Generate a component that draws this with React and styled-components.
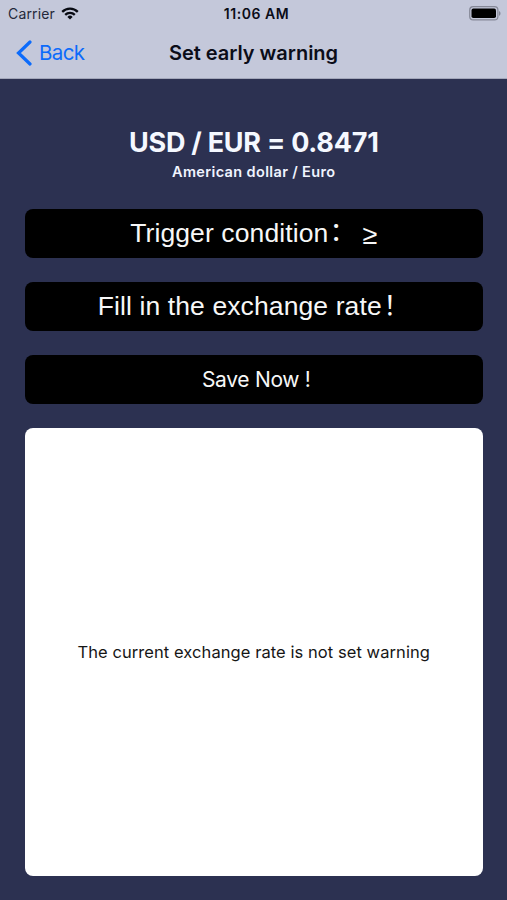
import React from "react";
import styled, { createGlobalStyle } from "styled-components";

const GlobalStyle = createGlobalStyle`
  * { box-sizing: border-box; }
  body { margin: 0; background: #2c3151; }
`;

const Screen = styled.div`
  display: flex;
  flex-direction: column;
  height: 900px;
  overflow: hidden;
  background: #2c3151;
  font-family: Inter, "Liberation Sans", sans-serif;
`;

const Header = styled.header`
  height: 79px;
  flex: none;
  background: #c4c8da;
  border-bottom: 1px solid #a3a7ba;
  color: #0b0d18;
`;

const StatusBar = styled.div`
  display: grid;
  grid-template-columns: 1fr auto 1fr;
  align-items: center;
  height: 27px;
  padding: 0 6px 0 8px;
  white-space: nowrap;
`;

const Carrier = styled.div`
  display: flex;
  align-items: center;
  gap: 6px;
  font-size: 14px;
  letter-spacing: 0.16px;
  color: #25283a;
`;

const Clock = styled.div`
  padding-left: 4px;
  font-size: 14px;
  font-weight: 600;
  letter-spacing: 0.55px;
`;

const BatteryIcon = styled.svg`
  justify-self: end;
`;

const NavBar = styled.nav`
  display: grid;
  grid-template-columns: 1fr auto 1fr;
  align-items: center;
  height: 51px;
  padding: 0 16px;
`;

const BackButton = styled.button`
  display: flex;
  align-items: center;
  justify-self: start;
  gap: 7px;
  padding: 0;
  border: 0;
  background: none;
  color: #0c6bfb;
  font: 400 20.5px Inter, sans-serif;
  letter-spacing: -0.6px;
`;

const Title = styled.h1`
  margin: 0;
  font-size: 20px;
  font-weight: 600;
  letter-spacing: -0.02px;
`;

const Content = styled.main`
  display: flex;
  flex-direction: column;
  flex: 1;
  padding: 47px 24.5px 24px 25px;
`;

const Rate = styled.h2`
  margin: 0;
  height: 34px;
  line-height: 34px;
  text-align: center;
  font-size: 27px;
  font-weight: 650;
  letter-spacing: -0.25px;
  color: #f5f8ff;
`;

const PairName = styled.p`
  margin: 0 0 23.9px;
  height: 25px;
  line-height: 24px;
  text-align: center;
  font-size: 14.5px;
  font-weight: 600;
  letter-spacing: 0.36px;
  color: #f0f4ff;
`;

const FieldList = styled.div`
  display: flex;
  flex-direction: column;
  gap: 24.3px;
  margin-bottom: 24.3px;
`;

const Field = styled.button`
  display: flex;
  align-items: center;
  justify-content: center;
  height: 48.8px;
  padding: 0;
  border: 0;
  border-radius: 8px;
  background: #000;
  color: #f7f7f7;
  white-space: pre;
  font: 400 26.5px "Liberation Sans", "Noto Sans CJK SC", sans-serif;
  letter-spacing: 0.11px;
`;

const SaveButton = styled(Field)`
  padding: 1px 0 0 5px;
  font: 400 21px Inter, sans-serif;
  letter-spacing: -0.3px;
`;

const FieldLabel = styled.span`
  padding-top: 1px;
`;

const Wide = styled.span`
  width: ${({ $width }) => $width}px;
  padding: 0 0 ${({ $lift }) => $lift}px ${({ $inset }) => $inset}px;
  text-align: left;
  font-family: "Noto Sans CJK SC", sans-serif;
  line-height: 40px;
`;

const Comparison = styled.span`
  padding-top: 1px;
  font-family: "Noto Sans", sans-serif;
  font-size: 27px;
  line-height: 42px;
`;

const WarningCard = styled.section`
  display: flex;
  align-items: center;
  justify-content: center;
  flex: 1;
  border-radius: 8px;
  background: #fff;
  color: #161616;
  font-size: 16.5px;
  letter-spacing: 0.07px;
  white-space: nowrap;
`;

export default function App() {
  return (
    <Screen>
      <GlobalStyle />
      <Header>
        <StatusBar>
          <Carrier>
            Carrier
            <svg width="18" height="13" viewBox="0 0 18 13" fill="none" stroke="#080a12" strokeWidth="2.3">
              <path d="M1.2 4.9a11.1 11.1 0 0 1 15.6 0" />
              <path d="M4.2 7.9a6.9 6.9 0 0 1 9.6 0" />
              <path d="M9 12.5 6.4 9.9a3.7 3.7 0 0 1 5.2 0z" fill="#080a12" stroke="none" />
            </svg>
          </Carrier>
          <Clock>11:06 AM</Clock>
          <BatteryIcon width="32" height="15" viewBox="0 0 32 15">
            <rect x="0.7" y="0.7" width="28.2" height="13.2" rx="3.5" fill="none" stroke="#858897" strokeWidth="1.2" />
            <rect x="2.5" y="2.6" width="24.5" height="9.5" rx="1.8" fill="#000" />
            <path d="M30 5c2 .8 2 4 0 4.8z" fill="#858897" />
          </BatteryIcon>
        </StatusBar>
        <NavBar>
          <BackButton>
            <svg width="16" height="26" viewBox="0 0 16 26" fill="none" stroke="currentColor" strokeWidth="3.2" strokeLinecap="round">
              <path d="M14 2 2.5 13 14 24" />
            </svg>
            Back
          </BackButton>
          <Title>Set early warning</Title>
        </NavBar>
      </Header>
      <Content>
        <Rate>USD / EUR = 0.8471</Rate>
        <PairName>American dollar / Euro</PairName>
        <FieldList>
          <Field>
            <FieldLabel>Trigger condition</FieldLabel>
            <Wide $width={34} $inset={1} $lift={7}>：</Wide>
            <Comparison>≥</Comparison>
          </Field>
          <Field>
            <FieldLabel>Fill in the exchange rate</FieldLabel>
            <Wide $width={28} $inset={1.5} $lift={4}>！</Wide>
          </Field>
          <SaveButton>Save Now !</SaveButton>
        </FieldList>
        <WarningCard>The current exchange rate is not set warning</WarningCard>
      </Content>
    </Screen>
  );
}
